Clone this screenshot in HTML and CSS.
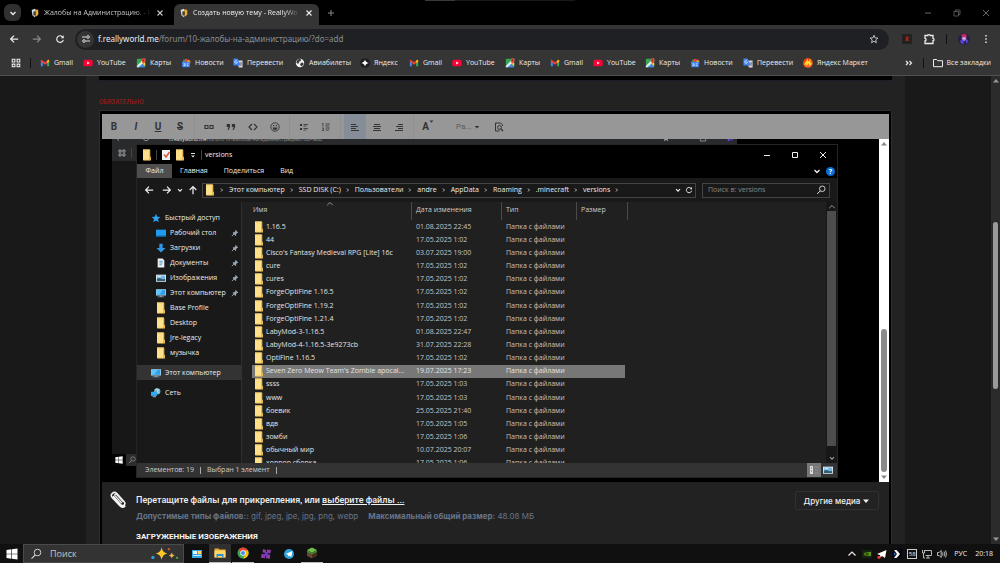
FILE: index.html
```html
<!DOCTYPE html>
<html lang="ru">
<head>
<meta charset="utf-8">
<title>Создать новую тему - ReallyWorld</title>
<link rel="stylesheet" href="styles.css">
</head>
<body>
<svg class="defs" aria-hidden="true">
  <symbol id="folder" viewBox="0 0 10 12"><path d="M1 .5h6.500v10.700H1z" fill="#ffe08a"/><path d="M7 1h1.300v6.500l.7.500v3.500H1.500v-.8H7z" fill="#e6b94d"/><path d="M1 .5h7v1H1z" fill="#f5ce68"/></symbol>
  <symbol id="gmail" viewBox="0 0 12 12"><path d="M1 3.500v6.500h2.500V5.500z" fill="#4285f4"/><path d="M11 3.500v6.500H8.500V5.500z" fill="#34a853"/><path d="M1 2.500 2 2l4 3 4-3 1 .5v1.700L6 8 1 4.200z" fill="#ea4335"/><path d="M8.500 3.200 10 2l1 .6v2L8.500 6.300z" fill="#fbbc04"/></symbol>
  <symbol id="youtube" viewBox="0 0 12 12"><rect x=".5" y="2" width="11" height="8" rx="2" fill="#ff0033"/><path d="m5 4.200 3 1.800-3 1.800z" fill="#fff"/></symbol>
  <symbol id="maps" viewBox="0 0 12 12"><rect x="1" y="1" width="10" height="10" rx="1" fill="#34a853"/><path d="m1 11 5-5 5 5z" fill="#4285f4"/><path d="M1 9.500 9.500 1H11v3L3 11H1z" fill="#e8eaed"/><path d="m7 6 4 4V6L9 4z" fill="#fbd04a"/><path d="M9 7C7.500 5 6.800 4 6.800 2.700a2.300 2.300 0 0 1 4.600 0C11.400 4 10.500 5 9 7z" fill="#ea4335"/><circle cx="9" cy="2.700" r=".8" fill="#8c1d18"/></symbol>
  <symbol id="news" viewBox="0 0 12 12"><path d="M2.500 2h4v4h-4z" fill="#34a853"/><path d="m5 1 5 1-1 5-5-1z" fill="#ea4335"/><path d="M8 3h3v4H7z" fill="#fbbc04"/><path d="M1 4.500h10L10.300 11H1.700z" fill="#4285f4"/><path d="M3 7h2M3 9h2V7M7 7h2M7 9h2" stroke="#fff" fill="none" stroke-width=".8"/></symbol>
  <symbol id="translate" viewBox="0 0 12 12"><path d="M5 3h6.500v8.500H7z" fill="#d5d8dc"/><path d="M.5.5h5L9 9H.5z" fill="#4285f4"/><path d="M5 3.800a1.600 1.600 0 1 0 .2 1.400H4" fill="none" stroke="#fff" stroke-width=".8"/><path d="M7.500 6H11M9.500 5.300V6M8 6c.5 1.500 1.500 2.500 2.700 3M10.500 6c-.5 2-1.500 3-2.500 3.400" fill="none" stroke="#5f6368" stroke-width=".7"/></symbol>
  <symbol id="globe" viewBox="0 0 12 12"><circle cx="6" cy="6" r="5" fill="#f1f3f4"/><path d="M3 2.500 5.500 1l2 1-1 2-2 .5.500 1.500L3 7 1.500 5zM7 6l2.500-.5 1 2L8 10 6 8.500z" fill="#35363a"/></symbol>
  <symbol id="yandex" viewBox="0 0 12 12"><circle cx="6" cy="6" r="5.800" fill="#1c1d22"/><path d="M6 1.500q.5 4 4.500 4.500-4 .5-4.500 4.500-.5-4-4.500-4.500 4-.5 4.500-4.500z" fill="#fff"/></symbol>
  <symbol id="market" viewBox="0 0 12 12"><circle cx="6" cy="6" r="5.800" fill="#ff5a1f"/><path d="M.7 7.500A5.500 5.500 0 0 1 6 .5a5.500 5.500 0 0 1 5 3z" fill="#ff3d00"/><path d="m2 8 3-4.500v4L8 3.500v4.500l2-1.500" fill="none" stroke="#ffe234" stroke-width="1.800"/></symbol>
  <symbol id="favicon" viewBox="0 0 12 12"><path d="M2 2.500 6 1v10L3 9z" fill="#cfe3ee"/><path d="M6 1.500 10 2v6L7 10.500 5.500 9z" fill="#d99a2b"/><path d="M4 4h3v5H4z" fill="#4d4032"/><path d="M7.500 3 9 6 7.500 9" stroke="#ffcf5c" fill="none"/></symbol>
  <symbol id="x" viewBox="0 0 10 10"><path d="m2.500 2.500 5 5M7.500 2.500l-5 5" stroke="currentColor" fill="none" stroke-width="1.100"/></symbol>
  <symbol id="x-big" viewBox="0 0 10 10"><path d="m2 2 6 6M8 2 2 8" stroke="currentColor" fill="none"/></symbol>
  <symbol id="down" viewBox="0 0 10 10"><path d="m2.500 4 2.500 2.500L7.500 4" stroke="currentColor" fill="none" stroke-width="1.400"/></symbol>
  <symbol id="up" viewBox="0 0 10 10"><path d="M1.500 6.500 5 3 8.500 6.500" stroke="currentColor" fill="none" stroke-width="1.200"/></symbol>
  <symbol id="right" viewBox="0 0 4 10"><path d="m1 3.500 1.500 1.500L1 6.500" stroke="currentColor" fill="none"/></symbol>
  <symbol id="arrow" viewBox="0 0 12 12"><path d="M11 6H2M6 2 2 6l4 4" stroke="currentColor" fill="none" stroke-width="1.500"/></symbol>
  <symbol id="caret" viewBox="0 0 8 8"><path d="M1 2.500h6L4 6z" fill="currentColor"/></symbol>
  <symbol id="reload" viewBox="0 0 12 12"><path d="M9.500 4A4 4 0 1 0 10 7" stroke="currentColor" fill="none" stroke-width="1.400"/><path d="M10.500 1.500V5H7z" fill="currentColor"/></symbol>
  <symbol id="search" viewBox="0 0 12 12"><circle cx="7.500" cy="4.500" r="3.300" stroke="currentColor" fill="none"/><path d="M5.200 7 1.500 10.700" stroke="currentColor" stroke-width="1.200"/></symbol>
  <symbol id="grid" viewBox="0 0 12 12"><path d="M1.500 1.500h3.200v3.200H1.500zM7.300 1.500h3.200v3.200H7.300zM1.500 7.300h3.200v3.200H1.500zM7.300 7.300h3.200v3.200H7.300z" stroke="currentColor" fill="none" stroke-width="1.300"/></symbol>
  <symbol id="pin" viewBox="0 0 10 10"><path d="m5.500 1 3.500 3.500-.8.500-.8 0-1 1.500v1.500l-.7.700L2 5l.8-.8h1.500l1-1.200z" fill="#9aa7b4"/><path d="M3.700 6.300 1 9" stroke="#9aa7b4" stroke-width="1.200"/></symbol>
  <symbol id="star" viewBox="0 0 12 12"><path d="m6 1 1.500 3.500 3.800.3-2.900 2.500.9 3.700L6 9l-3.300 2 .9-3.700L.7 4.800l3.800-.3z" fill="currentColor"/></symbol>
  <symbol id="pc" viewBox="0 0 12 12"><path d="M0 1.500h12v7.500H0z" fill="#b8d8ea"/><path d="M.8 2.200h10.400v6H.8z" fill="#2f9fe8"/><path d="M.8 2.200h7.500L4 8.200H.8z" fill="#5cc4fa"/><path d="M4.500 9h3v1.200h2.500v1H2v-1h2.500z" fill="#7e97a8"/></symbol>
  <symbol id="win" viewBox="0 0 12 12"><path d="m.5 2 4.800-.7v4.400H.5zM5.900 1.200 11.500.5v5.200H5.900zM.5 6.300h4.800v4.400L.5 10zM5.900 6.300h5.600v5.200l-5.600-.8z" fill="#fff"/></symbol>
  <symbol id="picture" viewBox="0 0 12 12"><path d="M0 2h12v8.500H0z" fill="#e7edf1"/><path d="M1 3h10v6.500H1z" fill="#76b8e0"/><path d="M1 7q3-2 5-.5T11 7v2.500H1z" fill="#315f75"/><path d="M2 4.500h4" stroke="#fff"/></symbol>
  <symbol id="avatar" viewBox="0 0 12 12"><circle cx="6" cy="6" r="6" fill="#291f45"/><path d="M3 1.800 7 .6l2 1.800-1 1.800H4z" fill="#bd2b50"/><path d="m4 4 4-.5.5 3L6 8.500 3.500 6z" fill="#ad74d4"/><path d="M2 7.500 5 7l1 4-3-.5zM8 6l2.500 2L8 11z" fill="#554adb"/><circle cx="6" cy="5.500" r="1" fill="#eac9cf"/></symbol>
  <symbol id="puzzle" viewBox="0 0 12 12"><path d="M2 2.500h2.700c0-1.300 2.600-1.300 2.600 0H10v2.800c1.300 0 1.300 2.400 0 2.400v2.800H2V8c1.500 0 1.500-2.700 0-2.700z" stroke="currentColor" fill="none" stroke-width="1.300"/></symbol>
</svg>

<header class="browser">
  <div class="tabstrip">
    <button class="tab-search" aria-label="Поиск вкладок"><svg class="i10"><use href="#down"/></svg></button>
    <div class="tab"><svg class="i10"><use href="#favicon"/></svg><span class="tab-title">Жалобы на Администрацию. - R</span><button class="plain" aria-label="Закрыть вкладку"><svg class="i10"><use href="#x"/></svg></button></div>
    <div class="tab tab-active"><svg class="i10"><use href="#favicon"/></svg><span class="tab-title">Создать новую тему - ReallyWo</span><button class="plain" aria-label="Закрыть вкладку"><svg class="i10"><use href="#x"/></svg></button></div>
    <button class="plain new-tab" aria-label="Новая вкладка"><svg class="i10" viewBox="0 0 10 10"><path d="M5 2v6M2 5h6" stroke="currentColor"/></svg></button>
    <div class="drag-mark"></div>
    <div class="win-controls">
      <button class="plain" aria-label="Свернуть"><svg class="i10" viewBox="0 0 10 10"><path d="M2 5h6" stroke="currentColor"/></svg></button>
      <button class="plain" aria-label="Восстановить"><svg class="i10" viewBox="0 0 10 10"><path d="M2 3.500h4.500V8H2zM3.500 3.500V2H8v4.500H6.500" fill="none" stroke="currentColor" stroke-width=".8"/></svg></button>
      <button class="plain" aria-label="Закрыть"><svg class="i10"><use href="#x-big"/></svg></button>
    </div>
  </div>
  <div class="addressbar">
    <button class="plain" aria-label="Назад"><svg class="i10"><use href="#arrow"/></svg></button>
    <button class="plain dim" aria-label="Вперёд"><svg class="i10 flip"><use href="#arrow"/></svg></button>
    <button class="plain" aria-label="Обновить"><svg class="i10"><use href="#reload"/></svg></button>
    <div class="omnibox">
      <span class="site-info"><svg class="i10" viewBox="0 0 10 10"><path d="M1 3h4M5 7h4" stroke="#ddd"/><circle cx="7" cy="3" r="1.300" fill="none" stroke="#ddd"/><circle cx="3" cy="7" r="1.300" fill="none" stroke="#ddd"/></svg></span>
      <span class="url"><b>f.reallyworld.me</b>/forum/10-жалобы-на-администрацию/?do=add</span>
      <svg class="i10" viewBox="0 0 12 12"><path d="m6 1.500 1.300 3.100 3.400.3-2.600 2.200.8 3.400L6 8.700l-2.900 1.800.8-3.400-2.600-2.200 3.400-.3z" fill="none" stroke="#ccc" stroke-width="1.100"/></svg>
    </div>
    <div class="extensions">
      <span class="ext-k">k</span>
      <button class="plain" aria-label="Расширения"><svg class="i12"><use href="#puzzle"/></svg></button>
      <span class="vline"></span>
      <svg class="i12"><use href="#avatar"/></svg>
      <button class="plain" aria-label="Меню"><svg class="i10" viewBox="0 0 10 10"><path d="M4.200 1h1.600v1.600H4.200zM4.200 4.200h1.600v1.600H4.200zM4.200 7.400h1.600V9H4.200z" fill="#ddd"/></svg></button>
    </div>
  </div>
  <nav class="bookmarks">
    <button class="plain" aria-label="Приложения"><svg class="i10"><use href="#grid"/></svg></button>
    <span class="vline"></span>
    <div class="bookmark-list">
      <a href="#"><svg class="i10"><use href="#gmail"/></svg>Gmail</a>
      <a href="#"><svg class="i10"><use href="#youtube"/></svg>YouTube</a>
      <a href="#"><svg class="i10"><use href="#maps"/></svg>Карты</a>
      <a href="#"><svg class="i10"><use href="#news"/></svg>Новости</a>
      <a href="#"><svg class="i10"><use href="#translate"/></svg>Перевести</a>
      <a href="#"><svg class="i10"><use href="#globe"/></svg>Авиабилеты</a>
      <a href="#"><svg class="i10"><use href="#yandex"/></svg>Яндекс</a>
      <a href="#"><svg class="i10"><use href="#gmail"/></svg>Gmail</a>
      <a href="#"><svg class="i10"><use href="#youtube"/></svg>YouTube</a>
      <a href="#"><svg class="i10"><use href="#maps"/></svg>Карты</a>
      <a href="#"><svg class="i10"><use href="#gmail"/></svg>Gmail</a>
      <a href="#"><svg class="i10"><use href="#youtube"/></svg>YouTube</a>
      <a href="#"><svg class="i10"><use href="#maps"/></svg>Карты</a>
      <a href="#"><svg class="i10"><use href="#news"/></svg>Новости</a>
      <a href="#"><svg class="i10"><use href="#translate"/></svg>Перевести</a>
      <a href="#"><svg class="i10"><use href="#market"/></svg>Яндекс Маркет</a>
    </div>
    <button class="plain more" aria-label="Другие закладки"><svg class="i10" viewBox="0 0 10 10"><path d="m2 3 2 2-2 2M5.500 3l2 2-2 2" stroke="currentColor" fill="none" stroke-width="1.200"/></svg></button>
    <span class="vline"></span>
    <a class="all-marks" href="#"><svg class="i10" viewBox="0 0 10 10"><path d="M.5 1.500h3.200l1 1.200h4.800v6H.5z" stroke="currentColor" fill="none"/></svg>Все закладки</a>
  </nav>
</header>

<main class="page">
  <div class="content">
    <div class="prev-field"></div>
    <div class="required">ОБЯЗАТЕЛЬНО</div>
    <section class="editor">
      <div class="toolbar">
        <div class="group">
          <button class="tool" aria-label="Жирный"><b>B</b></button>
          <button class="tool" aria-label="Курсив"><b><i>I</i></b></button>
          <button class="tool" aria-label="Подчёркнутый"><b><u>U</u></b></button>
          <button class="tool" aria-label="Зачёркнутый"><b><s>S</s></b></button>
        </div>
        <div class="group">
          <button class="tool" aria-label="Ссылка"><svg class="i10" viewBox="0 0 10 10"><path d="M4.500 3.500H1v3h3.500M5.500 3.500H9v3H5.500M3 5h4" stroke="currentColor" fill="none" stroke-width="1.200"/></svg></button>
          <button class="tool" aria-label="Цитата"><svg class="i10" viewBox="0 0 10 10"><path d="M.7 2h3.300v3.300L2.500 8h-1L2.500 5H.7zM5.800 2h3.300v3.300L7.600 8h-1l1-3H5.800z" fill="currentColor"/></svg></button>
          <button class="tool" aria-label="Код"><svg class="i10" viewBox="0 0 10 10"><path d="M4 2 1 5l3 3M6 2l3 3-3 3" stroke="currentColor" fill="none" stroke-width="1.200"/></svg></button>
          <button class="tool" aria-label="Смайлы"><svg class="i10" viewBox="0 0 10 10"><circle cx="5" cy="5" r="4.200" stroke="currentColor" fill="none" stroke-width=".9"/><path d="M2.500 5.500h5Q7 8 5 8T2.500 5.500z" fill="currentColor"/><path d="M3 3h1.200v1.200H3zM5.800 3H7v1.200H5.800z" fill="currentColor"/></svg></button>
        </div>
        <div class="group">
          <button class="tool" aria-label="Маркированный список"><svg class="i10" viewBox="0 0 10 10"><path d="M1 2h2v2H1zM1 6h2v2H1z" fill="currentColor"/><path d="M4.500 2.500H9M4.500 4h3M4.500 6.500H9M4.500 8h3" stroke="currentColor" stroke-width=".8"/></svg></button>
          <button class="tool" aria-label="Нумерованный список"><svg class="i10" viewBox="0 0 10 10"><path d="M1 1.500h1v3M1 6h1.500v1.200L1 8.500h2" stroke="currentColor" fill="none" stroke-width=".8"/><path d="M4.500 2H9M4.500 4H8M4.500 6H9M4.500 8H8" stroke="currentColor" stroke-width=".8"/></svg></button>
        </div>
        <div class="group">
          <button class="tool tool-on" aria-label="По левому краю"><svg class="i10" viewBox="0 0 10 10"><path d="M1 2.500h5M1 4.500h7M1 6.500h5M1 8.500h8" stroke="currentColor"/></svg></button>
          <button class="tool" aria-label="По центру"><svg class="i10" viewBox="0 0 10 10"><path d="M2 2.500h6M1 4.500h8M2 6.500h6M1 8.500h8" stroke="currentColor"/></svg></button>
          <button class="tool" aria-label="По правому краю"><svg class="i10" viewBox="0 0 10 10"><path d="M4 2.500h5M2 4.500h7M4 6.500h5M1 8.500h8" stroke="currentColor"/></svg></button>
        </div>
        <div class="group group-last">
          <button class="tool" aria-label="Цвет текста"><b>A</b><svg class="tiny"><use href="#caret"/></svg></button>
          <div class="size-wrap"><select class="size" aria-label="Размер"><option>Ра...</option></select><svg class="i6"><use href="#caret"/></svg></div>
          <button class="tool" aria-label="Предпросмотр"><svg class="i10" viewBox="0 0 10 10"><path d="M8.500 4V3L6.500 1H1.500v8h4" stroke="currentColor" fill="none"/><circle cx="5.500" cy="5.500" r="1.900" stroke="currentColor" fill="none"/><path d="m7 7 2 2" stroke="currentColor" stroke-width="1.200"/></svg></button>
        </div>
      </div>

      <div class="canvas">
        <div class="shot">
          <div class="shot-strip">
            <svg class="i8"><use href="#arrow"/></svg><svg class="i8"><use href="#reload"/></svg>
            <span class="shot-url"><b>f.reallyworld.me</b>/forum/10-жалобы-на-администрацию/?do=add</span>
            <span class="shot-pill"><svg class="i8"><use href="#star"/></svg></span>
            <svg class="i8"><use href="#puzzle"/></svg><svg class="i8"><use href="#avatar"/></svg>
          </div>
          <div class="shot-marks"><svg class="i8"><use href="#grid"/></svg><span class="vline"></span></div>
          <div class="shot-page"></div>
          <div class="shot-task"><svg class="i8"><use href="#win"/></svg><span class="shot-search"><svg class="i8"><use href="#search"/></svg></span></div>

          <div class="explorer">
            <div class="ex-title">
              <svg class="fold"><use href="#folder"/></svg><span class="vline"></span>
              <svg class="fold" viewBox="0 0 10 12"><path d="M1 1h8v10H1z" fill="#eef1f5"/><path d="M3 5.500 5 8l3.500-5" stroke="#dc5637" fill="none" stroke-width="1.500"/></svg>
              <svg class="fold"><use href="#folder"/></svg>
              <svg class="i8" viewBox="0 0 8 8"><path d="M2 2.500h4" stroke="#ddd"/><path d="M2 4.500h4L4 6.500z" fill="#ddd"/></svg>
              <span class="vline"></span><span class="ex-name">versions</span>
              <div class="ex-controls">
                <button class="plain" aria-label="Свернуть окно"><svg class="i10" viewBox="0 0 10 10"><path d="M2 5.500h6" stroke="currentColor"/></svg></button>
                <button class="plain" aria-label="Развернуть окно"><svg class="i10" viewBox="0 0 10 10"><path d="M2.500 2.500h5v5h-5z" fill="none" stroke="currentColor"/></svg></button>
                <button class="plain" aria-label="Закрыть окно"><svg class="i10"><use href="#x-big"/></svg></button>
              </div>
            </div>
            <div class="ribbon">
              <button class="rtab rtab-file">Файл</button><button class="rtab">Главная</button><button class="rtab">Поделиться</button><button class="rtab">Вид</button>
              <span class="ribbon-end"><svg class="i10"><use href="#down"/></svg><span class="help">?</span></span>
            </div>
            <div class="navrow">
              <button class="plain" aria-label="Назад"><svg class="i10"><use href="#arrow"/></svg></button>
              <button class="plain" aria-label="Вперёд"><svg class="i10 flip"><use href="#arrow"/></svg></button>
              <button class="plain" aria-label="Недавние"><svg class="i8"><use href="#down"/></svg></button>
              <button class="plain" aria-label="Вверх"><svg class="i10 turn"><use href="#arrow"/></svg></button>
              <div class="crumbs">
                <svg class="fold"><use href="#folder"/></svg>
                <svg class="sep"><use href="#right"/></svg><span>Этот компьютер</span>
                <svg class="sep"><use href="#right"/></svg><span>SSD DISK (C:)</span>
                <svg class="sep"><use href="#right"/></svg><span>Пользователи</span>
                <svg class="sep"><use href="#right"/></svg><span>andre</span>
                <svg class="sep"><use href="#right"/></svg><span>AppData</span>
                <svg class="sep"><use href="#right"/></svg><span>Roaming</span>
                <svg class="sep"><use href="#right"/></svg><span>.minecraft</span>
                <svg class="sep"><use href="#right"/></svg><span>versions</span>
                <svg class="sep"><use href="#right"/></svg>
                <span class="crumb-end"><svg class="i8"><use href="#down"/></svg><svg class="i8"><use href="#reload"/></svg></span>
              </div>
              <div class="ex-search"><input type="text" placeholder="Поиск в: versions" aria-label="Поиск в: versions"><svg class="i10"><use href="#search"/></svg></div>
            </div>
            <div class="ex-body">
              <ul class="tree">
                <li class="top"><svg class="i10 blue"><use href="#star"/></svg>Быстрый доступ</li>
                <li><svg class="i10" viewBox="0 0 12 12"><path d="M0 2h12v8H0z" fill="#1f9bf0"/><path d="M0 9h12v1.500H0z" fill="#0f67a8"/></svg>Рабочий стол<svg class="i8 pin"><use href="#pin"/></svg></li>
                <li><svg class="i10" viewBox="0 0 12 12"><path d="M4 1h4v5h3.500L6 11.500.5 6H4z" fill="#2f97e5"/></svg>Загрузки<svg class="i8 pin"><use href="#pin"/></svg></li>
                <li><svg class="i10" viewBox="0 0 12 12"><path d="M2 .5h6L10 3v8.500H2z" fill="#e8eef2"/><path d="M4 4h4M4 6h4M4 8h3" stroke="#4c91b8"/></svg>Документы<svg class="i8 pin"><use href="#pin"/></svg></li>
                <li><svg class="i10"><use href="#picture"/></svg>Изображения<svg class="i8 pin"><use href="#pin"/></svg></li>
                <li><svg class="i10"><use href="#pc"/></svg>Этот компьютер<svg class="i8 pin"><use href="#pin"/></svg></li>
                <li><svg class="fold"><use href="#folder"/></svg>Base Profile</li>
                <li><svg class="fold"><use href="#folder"/></svg>Desktop</li>
                <li><svg class="fold"><use href="#folder"/></svg>Jre-legacy</li>
                <li><svg class="fold"><use href="#folder"/></svg>музычка</li>
                <li class="top gap here"><svg class="i10"><use href="#pc"/></svg>Этот компьютер</li>
                <li class="top gap"><svg class="i10" viewBox="0 0 12 12"><circle cx="7.500" cy="4" r="3.800" fill="#75b6ca"/><path d="M5 2q2-2 4 0-2 2 0 4" stroke="#d7f2fa" fill="none"/><path d="M0 4.500h7v5H0z" fill="#31a9f3"/><path d="M2 10h4v1H2z" fill="#b8d8ea"/></svg>Сеть</li>
              </ul>
              <div class="files">
                <table>
                  <colgroup><col class="c-name"><col class="c-date"><col class="c-type"><col class="c-size"></colgroup>
                  <thead><tr><th>Имя<svg class="sort"><use href="#up"/></svg></th><th>Дата изменения</th><th>Тип</th><th>Размер</th></tr></thead>
                  <tbody>
                    <tr><td><svg class="fold"><use href="#folder"/></svg>1.16.5</td><td>01.08.2025 22:45</td><td>Папка с файлами</td><td></td></tr>
                    <tr><td><svg class="fold"><use href="#folder"/></svg>44</td><td>17.05.2025 1:02</td><td>Папка с файлами</td><td></td></tr>
                    <tr><td><svg class="fold"><use href="#folder"/></svg>Cisco's Fantasy Medieval RPG [Lite] 16c</td><td>03.07.2025 19:00</td><td>Папка с файлами</td><td></td></tr>
                    <tr><td><svg class="fold"><use href="#folder"/></svg>cure</td><td>17.05.2025 1:02</td><td>Папка с файлами</td><td></td></tr>
                    <tr><td><svg class="fold"><use href="#folder"/></svg>cures</td><td>17.05.2025 1:02</td><td>Папка с файлами</td><td></td></tr>
                    <tr><td><svg class="fold"><use href="#folder"/></svg>ForgeOptiFine 1.16.5</td><td>17.05.2025 1:02</td><td>Папка с файлами</td><td></td></tr>
                    <tr><td><svg class="fold"><use href="#folder"/></svg>ForgeOptiFine 1.19.2</td><td>17.05.2025 1:02</td><td>Папка с файлами</td><td></td></tr>
                    <tr><td><svg class="fold"><use href="#folder"/></svg>ForgeOptiFine 1.21.4</td><td>17.05.2025 1:02</td><td>Папка с файлами</td><td></td></tr>
                    <tr><td><svg class="fold"><use href="#folder"/></svg>LabyMod-3-1.16.5</td><td>01.08.2025 22:47</td><td>Папка с файлами</td><td></td></tr>
                    <tr><td><svg class="fold"><use href="#folder"/></svg>LabyMod-4-1.16.5-3e9273cb</td><td>31.07.2025 22:28</td><td>Папка с файлами</td><td></td></tr>
                    <tr><td><svg class="fold"><use href="#folder"/></svg>OptiFine 1.16.5</td><td>17.05.2025 1:02</td><td>Папка с файлами</td><td></td></tr>
                    <tr class="selected"><td><svg class="fold"><use href="#folder"/></svg>Seven Zero Meow Team's Zombie apocal...</td><td>19.07.2025 17:23</td><td>Папка с файлами</td><td></td></tr>
                    <tr><td><svg class="fold"><use href="#folder"/></svg>ssss</td><td>17.05.2025 1:03</td><td>Папка с файлами</td><td></td></tr>
                    <tr><td><svg class="fold"><use href="#folder"/></svg>www</td><td>17.05.2025 1:03</td><td>Папка с файлами</td><td></td></tr>
                    <tr><td><svg class="fold"><use href="#folder"/></svg>боевик</td><td>25.05.2025 21:40</td><td>Папка с файлами</td><td></td></tr>
                    <tr><td><svg class="fold"><use href="#folder"/></svg>вдв</td><td>17.05.2025 1:05</td><td>Папка с файлами</td><td></td></tr>
                    <tr><td><svg class="fold"><use href="#folder"/></svg>зомби</td><td>17.05.2025 1:06</td><td>Папка с файлами</td><td></td></tr>
                    <tr><td><svg class="fold"><use href="#folder"/></svg>обычный мир</td><td>10.07.2025 20:07</td><td>Папка с файлами</td><td></td></tr>
                    <tr><td><svg class="fold"><use href="#folder"/></svg>хоррор сборка</td><td>17.05.2025 1:06</td><td>Папка с файлами</td><td></td></tr>
                  </tbody>
                </table>
              </div>
              <div class="ex-scroll"><svg class="i8"><use href="#up"/></svg><span class="ex-thumb"></span><svg class="i8"><use href="#down"/></svg></div>
            </div>
            <div class="status"><span>Элементов: 19</span><span class="bar"></span><span>Выбран 1 элемент</span><span class="bar"></span>
              <span class="views"><button class="view view-on" aria-label="Таблица"><svg class="i10" viewBox="0 0 10 10"><path d="M1 1h3v8H1z" fill="#ddd"/><path d="M5.500 2h4M5.500 5h4M5.500 8h4" stroke="#999" stroke-width=".7"/><path d="M2 3h1M2 6h1" stroke="#b33"/></svg></button><button class="view" aria-label="Эскизы"><svg class="i10"><use href="#picture"/></svg></button></span>
            </div>
          </div>
        </div>
        <div class="canvas-scroll"><svg class="i8 flipv"><use href="#caret"/></svg><span class="canvas-thumb"></span><svg class="i8"><use href="#caret"/></svg></div>
      </div>

      <div class="attach">
        <svg class="clip" viewBox="0 0 18 18"><path d="M4 5.500 11.500 14q1.700 1.800 3.400.3t.1-3.500L7.200 2.200Q4.800-.2 2.500 1.900t0 4.600l7.700 8.300q3 3 5.500.7" fill="none" stroke="#f2f2f2" stroke-width="1.700" stroke-linecap="round"/><path d="m12.500 12.200-7-7.500Q4.600 3.600 5.400 3t1.700.3l7 7.700" fill="none" stroke="#f2f2f2" stroke-width="1.400"/></svg>
        <div class="attach-text">
          <p class="drop">Перетащите файлы для прикрепления, или <a href="#">выберите файлы ...</a></p>
          <p class="types"><b>Допустимые типы файлов::</b> gif, jpeg, jpe, jpg, png, webp<span class="max"><b>Максимальный общий размер:</b> 48.08 МБ</span></p>
          <h2 class="uploaded">ЗАГРУЖЕННЫЕ ИЗОБРАЖЕНИЯ</h2>
        </div>
        <button class="media">Другие медиа<svg class="i8"><use href="#caret"/></svg></button>
      </div>
    </section>
  </div>
  <div class="page-scroll"><svg class="i8 flipv"><use href="#caret"/></svg><span class="page-thumb"></span><svg class="i8"><use href="#caret"/></svg></div>
</main>

<footer class="taskbar">
  <button class="plain start" aria-label="Пуск"><svg class="i12"><use href="#win"/></svg></button>
  <label class="task-search"><svg class="i12"><use href="#search"/></svg><input type="text" placeholder="Поиск" aria-label="Поиск">
    <svg class="spark" viewBox="0 0 30 14"><path d="M12 0q.8 5.500 6 6.500-5.200 1-6 6.500-.8-5.500-6-6.500 5.200-1 6-6.500z" fill="#ffc629"/><path d="M22.500 5.500q.4 2.600 3 3-2.600.4-3 3-.4-2.600-3-3 2.600-.4 3-3z" fill="#f6b73c"/><circle cx="3" cy="10.500" r="1.700" fill="#2aa5e0"/><circle cx="19.500" cy="2" r="1.200" fill="#d8562b"/><circle cx="28" cy="11" r="1.100" fill="#5ba957"/></svg></label>
  <div class="apps">
    <button class="app" aria-label="Панель"><svg class="i12" viewBox="0 0 12 12"><path d="M1 2h10v8H1z" fill="#35a6e6"/><path d="M2 3h4v3H2z" fill="#e9f6fd"/><path d="M7 3h3v3H7z" fill="#ffd36a"/><path d="M2 7.500h8" stroke="#c7eaff"/></svg></button>
    <button class="app app-on open" aria-label="Проводник"><svg class="i12" viewBox="0 0 12 12"><path d="M.5 1.500h4l1 1h6v8H.5z" fill="#e6a92f"/><path d="M.5 3.500h11v7H.5z" fill="#ffd768"/><path d="M2.500 7h7v3.500H8V9H4v1.500H2.500z" fill="#2d8fd5"/></svg></button>
    <button class="app open" aria-label="Chrome"><svg class="i12" viewBox="0 0 12 12"><circle cx="6" cy="6" r="5.500" fill="#34a853"/><path d="M6 6 1.300 3.200A5.500 5.500 0 0 1 10.700 3.200z" fill="#ea4335"/><path d="M6 3.500h5A5.500 5.500 0 0 1 6 11.500L8.400 7z" fill="#fbbc04"/><circle cx="6" cy="6" r="2.700" fill="#fff"/><circle cx="6" cy="6" r="2" fill="#4285f4"/></svg></button>
    <button class="app" aria-label="Игры"><svg class="i12" viewBox="0 0 12 12"><path d="m3 1 3 1 .5 3-4-.5zM7 1.500l4 .5-.6 3.500L7 5zM1.500 6l4 .3-.5 4L1 9.800zM6.500 6.200l3.800.5-.6 4-3.800-.5z" fill="#8e3ba8"/><path d="m5 3.500 3 1-.5 4-3-1z" fill="#5c3fd0"/></svg></button>
    <button class="app" aria-label="Telegram"><svg class="i12" viewBox="0 0 12 12"><circle cx="6" cy="6" r="5" fill="#2aa1da"/><path d="m2.500 6 7-3-1.200 6-2.200-1.600-1 1.200-.4-2z" fill="#fff"/></svg></button>
    <button class="app open" aria-label="Minecraft"><svg class="i12" viewBox="0 0 12 12"><path d="m6 .5 5 2.500-5 3-5-3z" fill="#6cc04a"/><path d="m1 3 5 3v5.500L1 9z" fill="#69462f"/><path d="m11 3-5 3v5.500L11 9z" fill="#452d1e"/><path d="m1 3 5 3v1.500L1 5zM11 3 6 6v1.500L11 5z" fill="#3f8430"/></svg></button>
  </div>
  <div class="tray">
    <svg class="i10"><use href="#up"/></svg>
    <svg class="i10" viewBox="0 0 10 10"><path d="M0 1h10v8H0z" fill="#172313"/><path d="M5 3h4v4H5zM1.500 5q1.500-2 3.500-2v4Q2.500 7 1.500 5z" fill="#5c9412"/><circle cx="5" cy="5" r="1.200" fill="none" stroke="#172313" stroke-width=".8"/></svg>
    <svg class="i10" viewBox="0 0 10 10"><path d="M0 5 9.500 1 8 9 5 7 3.500 8.500 3 6z" fill="#fff"/><circle cx="2" cy="8.300" r="1.600" fill="#ec3b30"/></svg>
    <svg class="i10" viewBox="0 0 10 10"><path d="M0 0h10v10H0z" fill="#050810"/><path d="M2 1h2.500L8 5 4.500 9H2l3-4z" fill="#fff"/><path d="M2 3.500 4 5 2 6.500z" fill="#3769db"/></svg>
    <span class="temp">58</span>
    <svg class="i10" viewBox="0 0 10 10"><path d="M2.500 1.500h7v5h-6M6 6.500v2.300M4 9h4M.5 1v3h2V1M1.500 4v5H3" stroke="#ddd" fill="none" stroke-width=".8"/></svg>
    <svg class="i10" viewBox="0 0 10 10"><path d="M.5 3.500h1.700L4.200 1.500v7L2.200 6.500H.5zM5.500 3.500q1 1.500 0 3M7 2.500q1.700 2.500 0 5M8.500 1.500q2 3.500 0 7" stroke="#ddd" fill="none" stroke-width=".8"/></svg>
    <span class="lang">РУС</span><time>20:18</time>
  </div>
</footer>
</body>
</html>
```
FILE: styles.css
```css
* { box-sizing: border-box; }
body {
  margin: 0;
  height: 100vh;
  display: flex;
  flex-direction: column;
  overflow: hidden;
  background: #000;
  color: #ececec;
  font: 7px/10px "Open Sans", "Noto Sans", sans-serif;
}
button, input, select { font: inherit; color: inherit; }
button { padding: 0; border: 0; background: none; display: flex; align-items: center; justify-content: center; }
a { color: inherit; text-decoration: none; }
svg { display: block; flex: none; }
p, h2, ul { margin: 0; padding: 0; }
.defs { position: absolute; width: 0; height: 0; }
.i6 { width: 6px; height: 6px; }
.i8 { width: 8px; height: 8px; }
.i10 { width: 10px; height: 10px; }
.i12 { width: 12px; height: 12px; }
.fold { width: 10px; height: 12px; }
.flip { transform: scaleX(-1); }
.flipv { transform: scaleY(-1); }
.turn { transform: rotate(90deg); }
.dim { color: #888; }
.vline { width: 1px; height: 10px; background: #111; }

/* Browser chrome */
.browser { background: #353535; border-bottom: 1px solid #505050; }
.tabstrip { display: flex; align-items: stretch; height: 25px; background: #000; padding-left: 4px; }
.tab-search { width: 17px; height: 17px; margin: 4px 4px 0 0; border-radius: 6px; background: #303030; }
.tab { display: flex; align-items: center; gap: 4px; width: 149px; padding: 0 9px 0 5px; color: #c6c6c6; }
.tab-title { flex: 1; overflow: hidden; white-space: nowrap; mask-image: linear-gradient(90deg, #000 85%, transparent); }
.tab-active { width: 145px; margin-top: 4px; padding: 0 5px 4px; border-radius: 6px 6px 0 0; background: #353535; color: #eee; }
.new-tab { width: 24px; color: #888; }
.drag-mark { width: 150px; height: 1px; margin-left: 82px; background: linear-gradient(90deg, #3a3a3a 20%, #181818 20%); }
.win-controls { display: flex; gap: 19px; margin-left: auto; padding-right: 9px; color: #666; }
.addressbar { display: flex; align-items: center; gap: 13px; height: 26px; padding: 2px 9px 0; }
.omnibox { flex: 1; display: flex; align-items: center; gap: 4px; height: 21px; padding: 0 10px 0 2px; margin-left: -3px; border-radius: 11px; background: #1f2023; font-family: "Noto Sans", sans-serif; font-size: 8px; }
.site-info { display: grid; place-items: center; width: 17px; height: 17px; border-radius: 50%; background: #353535; }
.url { flex: 1; color: #8d8d8d; }
.url b, .shot-url b { font-weight: 400; color: #eee; }
.extensions { display: flex; align-items: center; gap: 11px; }
.ext-k { width: 10px; height: 10px; background: #222; color: #b3261e; font-weight: 700; font-style: italic; text-align: center; }
.bookmarks { display: flex; align-items: center; height: 24px; padding: 0 9px 0 11px; }
.bookmarks .vline { margin: 0 9px; }
.bookmark-list { display: grid; grid-template-columns: 43px 53px 45px 52px 62px 65px 49px 43px 53px 45px 43px 52px 45px 53px 60px auto; white-space: nowrap; }
.bookmark-list a, .all-marks { display: flex; align-items: center; gap: 4px; }
.more { margin-left: auto; }

/* Forum page */
.page { flex: 1; display: flex; min-height: 0; background: #191919; }
.content { flex: 1; margin: 0 86px; padding: 0 13px; background: #222; overflow: hidden; }
.prev-field { height: 5px; background: #000; border-bottom: 1px solid #1b1d28; }
.required { margin: 16px 0 3px; color: #a01c1c; font: 500 6px/10px Inter, sans-serif; }
.editor { border: 1px solid #2b2e35; border-radius: 2px; background: #000; padding: 3px 2px 0; }
.toolbar { display: flex; height: 25px; background: #979797; color: #333; font-family: Roboto, sans-serif; }
.group { display: flex; padding: 0 3px; border-right: 1px solid #8c8f94; }
.group:first-child { padding-left: 1px; }
.group-last { border: 0; align-items: center; }
.tool { width: 22px; height: 25px; font-size: 10px; }
.tool-on { background: #858d98; }
.tiny { width: 5px; height: 5px; margin-top: -10px; }
.size-wrap { display: flex; align-items: center; margin: 0 8px 0 17px; }
.size { width: 18px; padding: 0; border: 0; background: none; appearance: none; color: #5c5c5c; font-size: 8px; }

.canvas { display: flex; height: 343px; background: #000; }
.shot { position: relative; flex: 1; display: grid; grid-template-rows: 5px 17px 1fr 12px; grid-template-columns: 26px 599px; padding: 0 0 16px 10px; }
.shot-strip { grid-column: 1 / -1; display: flex; align-items: flex-end; gap: 19px; padding: 0 3px 2px; overflow: hidden; background: #292a2c; color: #999; font-size: 5px; line-height: 5px; }
.shot-url { flex: 1; }
.shot-pill { width: 18px; }
.shot-marks { grid-column: 1; display: flex; align-items: center; gap: 5px; padding-left: 6px; background: #292a2c; color: #aaa; }
.shot-page { grid-column: 1; background: #171717; }
.shot-task { grid-column: 1; display: flex; align-items: center; gap: 3px; padding-left: 3px; background: #050505; }
.shot-search { display: grid; place-items: center; width: 12px; height: 12px; background: #2c2c2c; color: #999; }

/* File explorer window */
.explorer { position: absolute; top: 5px; left: 34px; right: 41px; display: flex; flex-direction: column; border: 1px solid #252525; background: #000; }
.ex-title { display: flex; align-items: center; height: 19px; padding-left: 5px; gap: 4px; }
.ex-title .vline, .shot-marks .vline { background: #444; }
.ex-name { margin-left: -1px; }
.ex-controls { display: flex; gap: 18px; margin-left: auto; padding-right: 9px; color: #eee; }
.ribbon { display: flex; height: 14px; }
.rtab { padding: 0 8px; }
.rtab-file { width: 35px; background: #4f4d4d; }
.ribbon-end { display: flex; align-items: center; gap: 4px; margin-left: auto; padding-right: 2px; }
.help { width: 9px; height: 9px; border-radius: 50%; background: #0b6fd6; color: #fff; font-weight: 700; line-height: 9px; text-align: center; }
.navrow { display: flex; align-items: center; gap: 4px; height: 24px; padding: 0 7px; background: #191919; }
.navrow > .plain:first-child { margin-right: 4px; }
.crumbs { flex: 1; display: flex; align-items: center; gap: 5px; height: 15px; padding: 0 2px; border: 1px solid #444; white-space: nowrap; }
.sep { width: 4px; height: 10px; color: #bbb; }
.crumb-end { display: flex; gap: 3px; margin-left: auto; }
.ex-search { display: flex; align-items: center; width: 128px; height: 15px; margin-left: 2px; padding: 0 3px 0 5px; border: 1px solid #444; }
input { flex: 1; min-width: 0; padding: 0; border: 0; background: none; outline: 0; }
input::placeholder { color: #888; opacity: 1; }
.ex-body { display: flex; height: 261px; background: #202020; }
.tree { width: 105px; padding-top: 8px; border-right: 1px solid #303030; background: #191919; list-style: none; }
.tree li { display: flex; align-items: center; gap: 4px; height: 15px; padding: 0 2px 0 19px; white-space: nowrap; }
.tree .top { padding-left: 14px; }
.tree .gap { margin-top: 5px; }
.tree .here { background: #333; }
.tree .pin { margin-left: auto; }
.blue { color: #2ea3f2; }
.files { flex: 1; padding-left: 10px; overflow: hidden; }
table { width: 376px; height: 268px; border-collapse: separate; border-spacing: 0; table-layout: fixed; }
.c-name { width: 160px; }
.c-date { width: 90px; }
.c-type { width: 75px; }
.c-size { width: 51px; }
th { position: relative; height: 18px; padding: 0 4px 3px; border-right: 1px solid #4a4a4a; background-clip: padding-box; color: #ccc; font-weight: 400; text-align: left; }
th:first-child { padding-left: 1px; }
.sort { position: absolute; top: -2px; right: 77px; width: 8px; height: 8px; color: #999; }
td { padding: 0 4px; color: #c4c4c4; white-space: nowrap; vertical-align: middle; }
td:first-child { padding: 0 0 0 2px; color: #e4e4e4; }
td .fold { display: inline-block; margin-right: 2px; vertical-align: middle; }
.selected td { background: #777; background-clip: padding-box; color: #e4e4e4; }
.selected td:last-child { border-right: 3px solid transparent; }
.ex-scroll { display: flex; flex-direction: column; align-items: center; width: 11px; padding: 1px 0; background: #171717; color: #999; }
.ex-thumb { flex: 1; width: 9px; margin-bottom: 8px; background: #4d4d4d; }
.status { display: flex; align-items: center; gap: 6px; height: 14px; padding-left: 8px; background: #333; color: #ccc; }
.bar { width: 1px; height: 7px; background: #aaa; }
.views { display: flex; margin-left: auto; padding-right: 2px; }
.view { width: 14px; height: 14px; }
.view-on { background: #777; }

.canvas-scroll, .page-scroll { display: flex; flex-direction: column; align-items: center; width: 10px; }
.canvas-scroll { padding: 1px 0; background: #fff; color: #888; }
.canvas-thumb { width: 6px; height: 143px; margin: auto 0 1px; border-radius: 3px; background: #8a8a8a; }
.page-scroll { width: 9px; padding: 1px 0; background: #2b2b2b; color: #999; }
.page-thumb { width: 5px; height: 167px; margin: 137px 0 auto; border-radius: 3px; background: #9a9a9a; }

/* Attachments */
.attach { display: flex; align-items: flex-start; gap: 9px; height: 80px; padding: 9px 10px 0 8px; background: #222; font-family: Inter, sans-serif; }
.clip { width: 17px; height: 18px; }
.attach-text { flex: 1; padding-top: 4px; }
.drop { color: #f0f0f0; font-family: Roboto, sans-serif; font-size: 9px; font-weight: 500; }
.drop a { text-decoration: underline; }
.types { margin-top: 6px; color: #667489; font-size: 8px; }
.max { margin-left: 10px; }
.uploaded { margin-top: 11px; color: #f5f5f5; font-family: Roboto, sans-serif; font-size: 8px; line-height: 10px; }
.media { gap: 2px; width: 84px; height: 19px; border: 1px solid #303030; border-radius: 2px; color: #f0f0f0; font-size: 8px; font-weight: 500; }

/* Taskbar */
.taskbar { display: flex; align-items: stretch; height: 19px; background: #101010; }
.start { width: 23px; }
.task-search { display: flex; align-items: center; gap: 8px; width: 161px; padding: 0 4px 0 6px; border: 1px solid #4a4a4a; background: #333; color: #ccc; font-size: 9px; }
.task-search input::placeholder { color: #c4c4c4; }
.spark { width: 29px; height: 14px; }
.apps { display: flex; gap: 1px; margin-left: 2px; }
.app { width: 22px; }
.open { border-bottom: 1px solid #bbb; }
.app-on { background: #303030; }
.tray { display: flex; align-items: center; gap: 5px; margin-left: auto; padding-right: 7px; font-size: 7px; }
.temp { width: 10px; height: 10px; border: 1px solid #ccc; font-size: 6px; line-height: 8px; text-align: center; }
.lang { margin: 0 3px 0 2px; }
```
